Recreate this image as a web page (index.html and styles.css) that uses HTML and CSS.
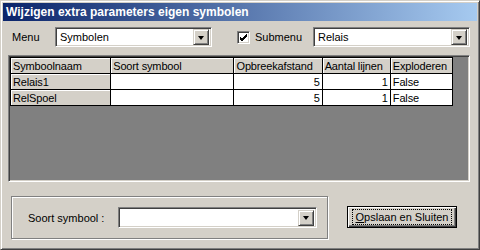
FILE: index.html
```html
<!DOCTYPE html>
<html>
<head>
<meta charset="utf-8">
<link rel="stylesheet" href="styles.css">
</head>
<body>
<div class="window">
  <div class="titlebar"><span class="title">Wijzigen extra parameters eigen symbolen</span></div>
  <div class="toprow">
    <span class="lbl menu-lbl">Menu</span>
    <div class="combo combo-menu"><span class="combo-text">Symbolen</span><span class="dd"><i class="tri"></i></span></div>
    <span class="check"><svg width="9" height="9" viewBox="0 0 9 9"><path d="M1 4 L3 6 L8 1 M1 5 L3 7 L8 2 M1 6 L3 8 L8 3" stroke="#000" stroke-width="1" fill="none" shape-rendering="crispEdges"/></svg></span>
    <span class="lbl sub-lbl">Submenu</span>
    <div class="combo combo-sub"><span class="combo-text">Relais</span><span class="dd"><i class="tri"></i></span></div>
  </div>
  <div class="grid">
    <table class="tbl">
      <tr class="hdr">
        <td class="fixed c1">Symboolnaam</td>
        <td class="fixed c2">Soort symbool</td>
        <td class="fixed c3">Opbreekafstand</td>
        <td class="fixed c4">Aantal lijnen</td>
        <td class="fixed c5">Exploderen</td>
      </tr>
      <tr>
        <td class="fixed">Relais1</td>
        <td class="cell"></td>
        <td class="cell num">5</td>
        <td class="cell num">1</td>
        <td class="cell">False</td>
      </tr>
      <tr>
        <td class="fixed">RelSpoel</td>
        <td class="cell"></td>
        <td class="cell num">5</td>
        <td class="cell num">1</td>
        <td class="cell">False</td>
      </tr>
    </table>
  </div>
  <div class="bottomrow">
    <div class="group">
      <span class="lbl soort-lbl">Soort symbool :</span>
      <div class="combo combo-soort"><span class="combo-text"></span><span class="dd"><i class="tri"></i></span></div>
    </div>
    <button class="btn"><span class="focus"><u>O</u>pslaan en Sluiten</span></button>
  </div>
</div>
</body>
</html>
```
FILE: styles.css
```css
* { box-sizing: border-box; }
html, body { margin: 0; padding: 0; }
body { width: 480px; height: 250px; overflow: hidden; background: #d4d0c8; font-family: "Liberation Sans", Arial, sans-serif; font-size: 11px; color: #000; }
.window {
  width: 480px; height: 250px;
  background: #d4d0c8;
  border-top: 1px solid #d4d0c8; border-left: 1px solid #d4d0c8;
  border-right: 1px solid #404040; border-bottom: 1px solid #404040;
  box-shadow: inset 1px 1px 0 #fff, inset -1px -1px 0 #808080;
  padding: 2px;
  display: flex; flex-direction: column;
}
.titlebar {
  height: 18px;
  background: linear-gradient(to right, #0a246a, #a6caf0);
  color: #fff;
  display: flex; align-items: center;
  padding-left: 3px;
}
.title { font-family: "Liberation Sans", Arial, sans-serif; font-weight: bold; font-size: 12px; }
.toprow { display: flex; align-items: center; height: 20px; margin-top: 6px; }
.lbl { white-space: nowrap; }
.menu-lbl { margin-left: 9px; width: 43px; }
.combo {
  height: 20px; background: #fff;
  border-top: 1px solid #808080; border-left: 1px solid #808080;
  border-right: 1px solid #fff; border-bottom: 1px solid #fff;
  box-shadow: inset 1px 1px 0 #404040, inset -1px -1px 0 #d4d0c8;
  display: flex; align-items: center; padding: 2px;
}
.combo-text { flex: 1; padding-left: 2px; }
.combo-menu { width: 157px; }
.combo-sub { width: 157px; }
.dd {
  width: 16px; height: 16px; background: #d4d0c8;
  border-top: 1px solid #d4d0c8; border-left: 1px solid #d4d0c8;
  border-right: 1px solid #404040; border-bottom: 1px solid #404040;
  box-shadow: inset 1px 1px 0 #fff, inset -1px -1px 0 #808080;
  display: flex; align-items: center; justify-content: center;
}
.tri { width: 0; height: 0; border-left: 3.5px solid transparent; border-right: 3.5px solid transparent; border-top: 4px solid #000; margin-top: 1px; }
.check {
  width: 13px; height: 13px; margin-left: 25px; background: #fff;
  border-top: 1px solid #808080; border-left: 1px solid #808080;
  border-right: 1px solid #fff; border-bottom: 1px solid #fff;
  box-shadow: inset 1px 1px 0 #404040, inset -1px -1px 0 #d4d0c8;
  display: flex; align-items: center; justify-content: center;
}
.check svg { display: block; }
.sub-lbl { margin-left: 5px; width: 58px; }
.grid {
  margin: 8px 7px 0 5px; height: 127px; background: #808080;
  border-top: 1px solid #808080; border-left: 1px solid #808080;
  border-right: 1px solid #fff; border-bottom: 1px solid #fff;
  box-shadow: inset 1px 1px 0 #404040, inset -1px -1px 0 #d4d0c8;
  padding: 1px 0 0 1px;
}
.tbl { border-collapse: collapse; table-layout: fixed; width: 443px; }
.tbl td { height: 16px; padding: 0 2px; border: 1px solid #000; white-space: nowrap; overflow: hidden; line-height: 14px; letter-spacing: -0.15px; }
.tbl .fixed { background: #d4d0c8; box-shadow: inset 1px 1px 0 #fff; }
.tbl .cell { background: #fff; }
.tbl .num { text-align: right; }
.c1 { width: 100px; }
.c2 { width: 123px; }
.c3 { width: 88px; }
.c4 { width: 68px; }
.c5 { width: 62px; }
.bottomrow { display: flex; align-items: flex-start; margin-top: 14px; }
.group {
  margin-left: 8px; width: 317px; height: 43px;
  border: 1px solid #808080;
  box-shadow: inset 1px 1px 0 #fff, 1px 1px 0 #fff;
  display: flex; align-items: center;
}
.soort-lbl { margin-left: 16px; width: 90px; }
.combo-soort { width: 199px; height: 21px; }
.btn {
  margin-left: 19px; margin-top: 10px; width: 110px; height: 22px; padding: 0;
  background: #d4d0c8; border: 1px solid #000;
  box-shadow: inset 1px 1px 0 #fff, inset -1px -1px 0 #404040, inset -2px -2px 0 #808080;
  font-family: "Liberation Sans", Arial, sans-serif; font-size: 11px; color: #000;
  display: flex; align-items: center; justify-content: center;
}
.focus { border: 1px dotted #000; padding: 1px 3px; line-height: 12px; }
```
